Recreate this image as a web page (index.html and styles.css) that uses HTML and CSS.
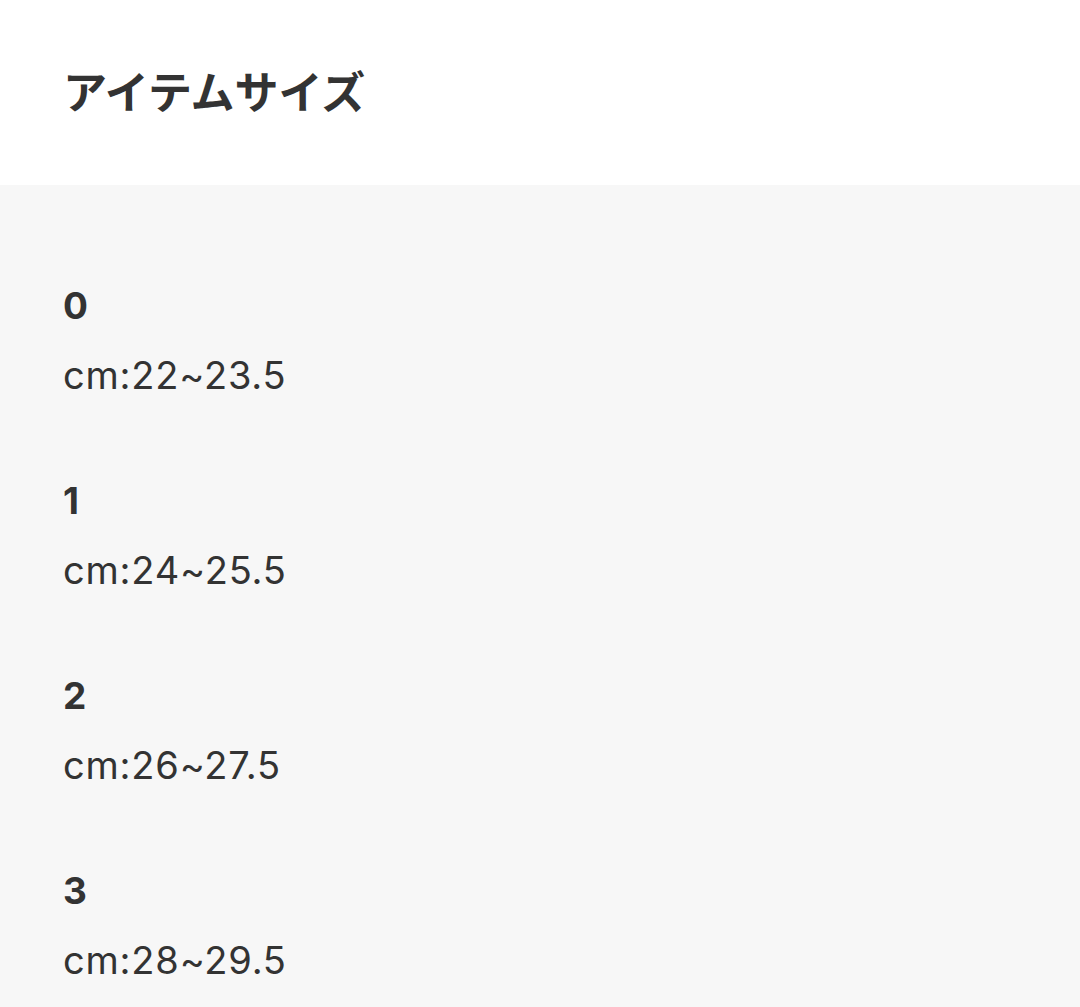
FILE: index.html
```html
<!DOCTYPE html>
<html lang="ja">
<head>
<meta charset="utf-8">
<link rel="stylesheet" href="styles.css">
</head>
<body>
<header class="header">
  <h1 class="title">アイテムサイズ</h1>
</header>
<section class="sizes">
  <div class="item">
    <div class="label">0</div>
    <div class="value">cm:22~23.5</div>
  </div>
  <div class="item">
    <div class="label">1</div>
    <div class="value">cm:24~25.5</div>
  </div>
  <div class="item">
    <div class="label">2</div>
    <div class="value">cm:26~27.5</div>
  </div>
  <div class="item">
    <div class="label">3</div>
    <div class="value">cm:28~29.5</div>
  </div>
</section>
</body>
</html>
```
FILE: styles.css
```css
html, body {
  margin: 0;
  padding: 0;
  background: #f7f7f7;
}
body {
  font-family: Inter, "Noto Sans CJK JP", sans-serif;
  color: #333333;
}
.header {
  background: #ffffff;
  height: 185px;
  padding: 0 63px 6px;
  box-sizing: border-box;
  display: flex;
  align-items: center;
}
.title {
  margin: 0;
  font-family: "Noto Sans CJK JP", sans-serif;
  font-weight: 700;
  font-size: 44px;
  line-height: 1;
  color: #333333;
}
.sizes {
  padding: 91px 63px 0;
  display: flex;
  flex-direction: column;
  gap: 61px;
}
.item {
  display: flex;
  flex-direction: column;
  gap: 4px;
}
.label {
  font-weight: 700;
  font-size: 37px;
  line-height: 60px;
}
.value {
  font-size: 38px;
  line-height: 70px;
  letter-spacing: 0.8px;
}
```
